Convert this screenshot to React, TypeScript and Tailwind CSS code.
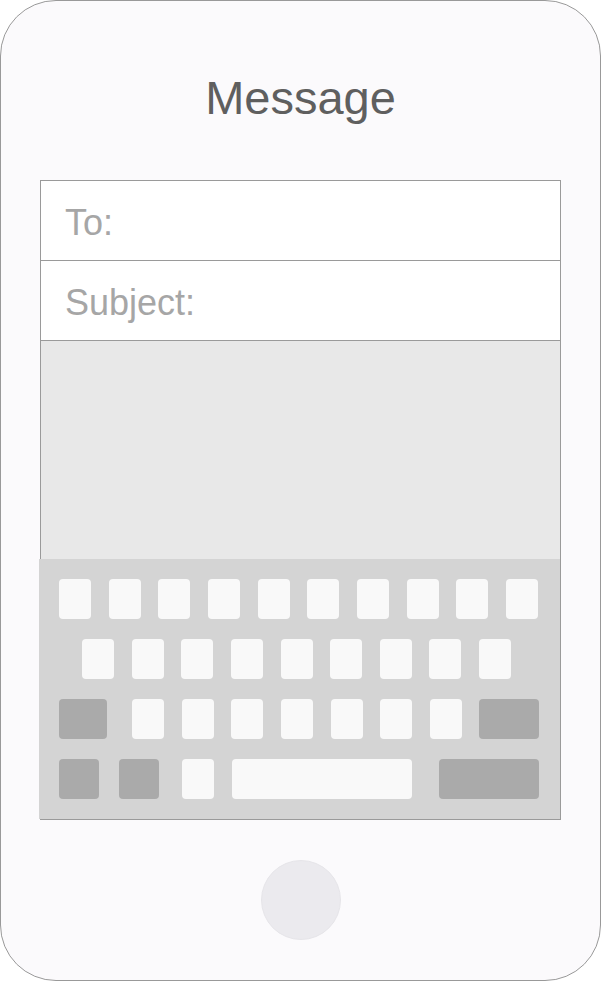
const Key = ({ w = "w-[32px]", dark = false }: { w?: string; dark?: boolean }) => (
  <div className={`${w} h-[40px] rounded-[4px] ${dark ? "bg-[#aaaaaa]" : "bg-[#f9f9f9]"}`}></div>
)

export default function App() {
  return (
    <div className="w-[601px] h-[981px] bg-white" style={{ fontFamily: '"Liberation Sans", Arial, sans-serif' }}>
      <div className="w-[601px] h-[981px] rounded-[56px] border border-[#999999] bg-[#fbfafc] flex flex-col items-center">
        {/* title */}
        <div className="h-[179px] pt-[73px] text-[47px] leading-none text-[#5f5f5f]">Message</div>

        {/* message form */}
        <div className="w-[521px] border border-[#9a9a9a] bg-white flex flex-col">
          <div className="h-[80px] border-b border-[#9a9a9a] pl-6 pt-[24px] text-[36px] leading-none text-[#a6a6a6]">
            To:
          </div>
          <div className="h-[80px] border-b border-[#9a9a9a] pl-6 pt-[24px] text-[36px] leading-none text-[#a6a6a6]">
            Subject:
          </div>
          <div className="h-[218px] bg-[#e8e8e8]"></div>

          {/* keyboard */}
          <div className="-ml-[2px] w-[521px] bg-[#d4d4d4] pl-[20px] py-[20px] flex flex-col gap-[20px]">
            <div className="w-[479px] flex justify-between">
              {Array.from({ length: 10 }).map((_, i) => (
                <Key key={i} />
              ))}
            </div>
            <div className="ml-[23px] w-[429px] flex justify-between">
              {Array.from({ length: 9 }).map((_, i) => (
                <Key key={i} />
              ))}
            </div>
            <div className="flex">
              <Key w="w-[48px]" dark />
              <div className="ml-[25px] w-[330px] flex justify-between">
                {Array.from({ length: 7 }).map((_, i) => (
                  <Key key={i} />
                ))}
              </div>
              <div className="ml-[17px]">
                <Key w="w-[60px]" dark />
              </div>
            </div>
            <div className="flex">
              <Key w="w-[40px]" dark />
              <div className="ml-[20px]">
                <Key w="w-[40px]" dark />
              </div>
              <div className="ml-[23px]">
                <Key />
              </div>
              <div className="ml-[18px]">
                <Key w="w-[180px]" />
              </div>
              <div className="ml-[27px]">
                <Key w="w-[100px]" dark />
              </div>
            </div>
          </div>
        </div>

        {/* home button */}
        <div className="mt-[40px] w-[80px] h-[80px] rounded-full bg-[#ebeaee] border border-[#e6e5e9]"></div>
      </div>
    </div>
  )
}
